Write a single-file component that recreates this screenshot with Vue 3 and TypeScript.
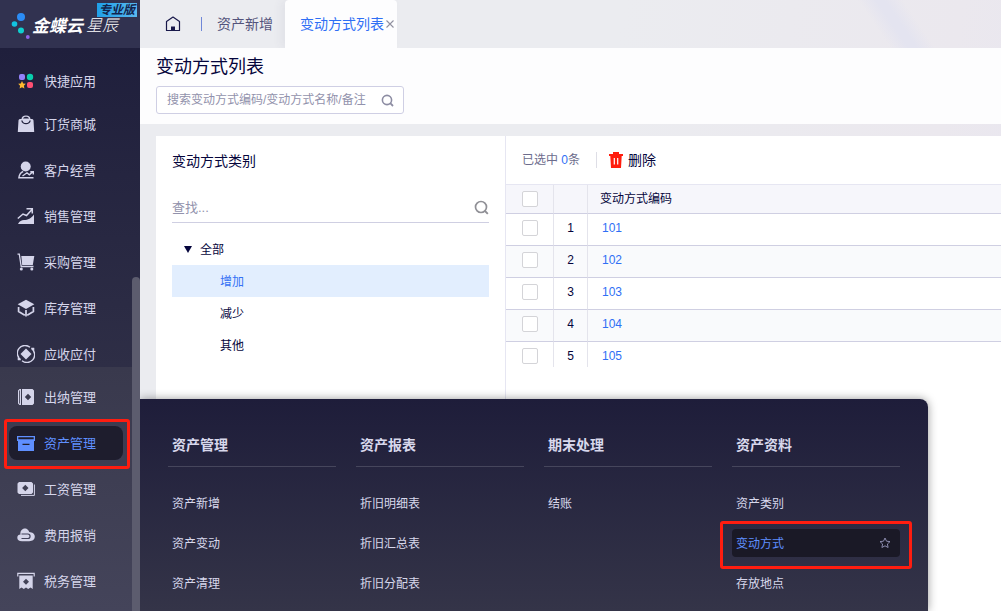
<script setup lang="ts">
import { ref } from 'vue'

interface MenuItem {
  label: string
  icon: string
  active?: boolean
}

interface FlyoutGroup {
  title: string
  items: string[]
}

const upperMenu: MenuItem[] = [
  { label: '订货商城', icon: 'bag' },
  { label: '客户经营', icon: 'customer' },
  { label: '销售管理', icon: 'sales' },
  { label: '采购管理', icon: 'cart' },
  { label: '库存管理', icon: 'box' },
  { label: '应收应付', icon: 'cycle' },
]

const lowerMenu: MenuItem[] = [
  { label: '出纳管理', icon: 'ledger' },
  { label: '资产管理', icon: 'archive', active: true },
  { label: '工资管理', icon: 'wage' },
  { label: '费用报销', icon: 'expense' },
  { label: '税务管理', icon: 'tax' },
]

const flyout: FlyoutGroup[] = [
  { title: '资产管理', items: ['资产新增', '资产变动', '资产清理'] },
  { title: '资产报表', items: ['折旧明细表', '折旧汇总表', '折旧分配表'] },
  { title: '期末处理', items: ['结账'] },
  { title: '资产资料', items: ['资产类别', '变动方式', '存放地点'] },
]
const activeEntry = '变动方式'

const categories = ['增加', '减少', '其他']
const category = ref('增加')
const codes = ['101', '102', '103', '104', '105']
const keyword = ref('')
const treeKeyword = ref('')
</script>

<template>
  <div class="app">
    <aside class="sidebar">
      <div class="brand">
        <svg class="brand-mark" width="20" height="28" viewBox="0 0 20 28" aria-hidden="true">
          <circle cx="10" cy="6" r="4" fill="#2b8cf5" />
          <circle cx="3.5" cy="13" r="2.8" fill="#12c3e0" />
          <circle cx="10" cy="19.500" r="3" fill="#0fd0cf" />
          <circle cx="16.800" cy="26" r="1.900" fill="#8f63e8" />
        </svg>
        <span class="brand-name">金蝶云</span>
        <span class="brand-sub">星辰</span>
        <span class="edition">专业版</span>
      </div>
      <nav class="menu">
        <a href="#" class="menu-item quick">
          <svg width="18" height="18" viewBox="0 0 18 18" aria-hidden="true">
            <rect x="2" y="2" width="6" height="6" rx="2" fill="#9381fa" />
            <circle cx="13" cy="5" r="3.200" fill="#08cfae" />
            <path d="M5 9l1.200 2.500 2.600.3-1.900 1.900.5 2.800L5 15.200l-2.400 1.300.5-2.800-1.900-1.900 2.600-.3z" fill="#ffb92e" />
            <rect x="10" y="10" width="6" height="6" rx="2" fill="#ff4f72" />
          </svg>
          <span>快捷应用</span>
        </a>
        <div class="upper">
          <a v-for="m in upperMenu" :key="m.label" href="#" class="menu-item">
            <svg width="18" height="18" viewBox="0 0 18 18" fill="currentColor" aria-hidden="true">
              <template v-if="m.icon === 'bag'">
                <path fill-rule="evenodd" d="M4.500 4C4.700 1.800 6 .5 9 .5s4.300 1.300 4.500 3.500h1.200c1 0 1.600.5 1.800 1.500L17.200 17H.8L1.500 5.500C1.700 4.500 2.300 4 3.300 4zM6 3.500h6C11.500 2.300 10.500 1.800 9 1.800S6.500 2.300 6 3.500zM4.200 5.500C4.700 8 6.500 9.300 9 9.300s4.300-1.300 4.800-3.800h-1.300C12 7.300 10.900 8.100 9 8.100S6 7.300 5.500 5.500z" />
              </template>
              <template v-else-if="m.icon === 'customer'">
                <circle cx="8.700" cy="5.500" r="5" />
                <path fill="none" stroke="currentColor" stroke-width="1.400" d="M6.200 10.500C3.500 11.500 2.300 13.500 1.900 16.700H16.500M5.500 15l4.500-3.200 2.300 2 3.700-3.200M13.300 10.700h3v2.800" />
              </template>
              <template v-else-if="m.icon === 'sales'">
                <path d="M1 17c1.500-3 3.500-4 6-4 4 0 7-1.500 10-5.500V17z" />
                <path fill="none" stroke="currentColor" stroke-width="1.500" d="M.8 11.500L6 7l3.500 1.500L15 2.500M9.500 1.800h5.800v4.700" />
              </template>
              <template v-else-if="m.icon === 'cart'">
                <path d="M4.300 3H17.300L15.800 12H5.200z" />
                <path fill="none" stroke="currentColor" stroke-width="1.300" d="M.5 1.200h1.800l1.900 12.300H16.500" />
                <circle cx="4.300" cy="16" r="1.500" /><circle cx="14.800" cy="16" r="1.500" />
              </template>
              <template v-else-if="m.icon === 'box'">
                <path d="M9 .7l8.300 4.500L9 10 .7 5.200z" />
                <path fill="none" stroke="currentColor" stroke-width="1.700" d="M1.600 8v4.500L7.800 16.200M16.400 8v4.500L10.200 16.200M9 11v6.500" />
              </template>
              <template v-else>
                <path d="M9 3.500L14.500 9 9 14.500 3.500 9z" />
                <path fill="none" stroke="currentColor" stroke-width="1.400" d="M3.200 14.300A7.700 7.700 0 0 1 13 2.200M14.800 3.700A7.700 7.700 0 0 1 5 15.800M.8 14.500h3M17.200 3.500h-3M16.600 3v4M1.400 15v-4" />
              </template>
            </svg>
            <span>{{ m.label }}</span>
          </a>
        </div>
        <div class="lower">
          <a v-for="m in lowerMenu" :key="m.label" href="#" class="menu-item" :class="{ active: m.active }">
            <svg width="18" height="18" viewBox="0 0 18 18" fill="currentColor" aria-hidden="true">
              <template v-if="m.icon === 'ledger'">
                <path fill-rule="evenodd" d="M2.500 1H4v16H2.500L1 15.500v-13zM2.200 2.500v13H3v-13zM5 1h10.500L17 2.500v13L15.500 17H5zM11 5.800L7.800 9l3.200 3.200L14.200 9z" />
              </template>
              <template v-else-if="m.icon === 'archive'">
                <path fill-rule="evenodd" d="M0 2h18v5H0zM1.300 3.300v2h15.400v-2z" />
                <path fill-rule="evenodd" d="M1 7h16v10H1zM5.500 9.800V11h7V9.800z" />
              </template>
              <template v-else-if="m.icon === 'wage'">
                <path fill-rule="evenodd" d="M2 2h12.500L16 3.500v9L14.500 14H2L.5 12.500v-9zM8.300 4.800L5.100 8l3.200 3.200L11.500 8z" />
                <path fill="none" stroke="currentColor" d="M17.400 4.500V15.400H4" />
              </template>
              <template v-else-if="m.icon === 'expense'">
                <path d="M3.500 8.500C2.500 3.500 8 .8 11 4c.8.800 1 1.400 1.200 2 3.200.2 5.600 1.900 5.600 4.500 0 2.900-2.200 4.700-5.600 4.700H5C1.800 15.200.3 13.700.3 11.700S1.700 8.500 3.500 8.500z" />
                <path class="cut" fill="none" stroke-width="1.200" d="M4.500 8h6.300c3 0 3 4.500 0 4.500H4.500" />
              </template>
              <template v-else>
                <path fill-rule="evenodd" d="M2.300 3.500h13.400V17l-2.200-1.500-2.300 1.500L9 15.500 6.800 17l-2.300-1.500L2.300 17zM9 6.800L6 9.800l3 3 3-3z" />
                <path fill="none" stroke="currentColor" stroke-width="1.200" d="M.8 4.500V1.300h16.400v3.200" />
              </template>
            </svg>
            <span>{{ m.label }}</span>
          </a>
        </div>
      </nav>
      <div class="scroll-thumb"></div>
    </aside>

    <main class="main">
      <header class="tabs">
        <button class="home" aria-label="首页">
          <svg width="16" height="16" viewBox="0 0 16 16" aria-hidden="true">
            <path d="M1.500 14.500v-9L8 1l6.500 4.500v9z" fill="none" stroke="#18184a" stroke-width="1.200" stroke-linejoin="round" />
            <path d="M6 10.500h4v4H6z" fill="#18184a" />
          </svg>
        </button>
        <span class="tab-sep"></span>
        <button class="tab">资产新增</button>
        <div class="tab current">
          <button class="tab-label">变动方式列表</button>
          <button class="close" aria-label="关闭">
            <svg width="8" height="8" viewBox="0 0 8 8" aria-hidden="true">
              <path d="M.5.5l7 7M7.500.5l-7 7" stroke="#9090a0" stroke-width="1.100" />
            </svg>
          </button>
        </div>
      </header>

      <section class="title-bar">
        <h1>变动方式列表</h1>
        <div class="search">
          <input v-model="keyword" type="text" aria-label="搜索" placeholder="搜索变动方式编码/变动方式名称/备注" />
          <svg width="13" height="13" viewBox="0 0 13 13" aria-hidden="true">
            <circle cx="6" cy="6" r="4.600" fill="none" stroke="#8d8da3" stroke-width="1.600" />
            <path d="M9.200 9.200l2.800 2.800" stroke="#8d8da3" stroke-width="1.800" />
          </svg>
        </div>
      </section>

      <div class="content">
        <section class="category">
          <h2>变动方式类别</h2>
          <div class="tree-search">
            <input v-model="treeKeyword" type="text" aria-label="查找类别" placeholder="查找..." />
            <svg width="15" height="15" viewBox="0 0 15 15" aria-hidden="true">
              <circle cx="7" cy="7" r="5.500" fill="none" stroke="#909096" stroke-width="1.700" />
              <path d="M10.500 10.500l3.300 3.300" stroke="#909096" stroke-width="1.900" />
            </svg>
          </div>
          <div class="tree">
            <button class="node root">
              <svg width="8" height="7" viewBox="0 0 8 7" aria-hidden="true"><path d="M0 0h8L4 7z" fill="#05053c" /></svg>
              <span>全部</span>
            </button>
            <button
              v-for="c in categories"
              :key="c"
              class="node leaf"
              :class="{ selected: c === category }"
              @click="category = c"
            ><span>{{ c }}</span></button>
          </div>
        </section>

        <section class="list">
          <div class="toolbar">
            <span class="picked">已选中 <b>0</b>条</span>
            <button class="delete">
              <svg width="14" height="16" viewBox="0 0 14 16" aria-hidden="true">
                <path fill="#ff1d0e" fill-rule="evenodd" d="M4 0h6v2h4v2h-1.300L12 16H2L1.300 4H0V2h4zM4.700 6v6.500h1.200V6zm3.400 0v6.500h1.200V6z" />
              </svg>
              <span>删除</span>
            </button>
          </div>
          <table>
            <thead>
              <tr>
                <th class="col-check"><input type="checkbox" aria-label="全选" /></th>
                <th class="col-no"></th>
                <th class="col-code">变动方式编码</th>
              </tr>
            </thead>
            <tbody>
              <tr v-for="(code, i) in codes" :key="code">
                <td class="col-check"><input type="checkbox" :aria-label="'选择 ' + code" /></td>
                <td class="col-no">{{ i + 1 }}</td>
                <td class="col-code"><a href="#">{{ code }}</a></td>
              </tr>
            </tbody>
          </table>
        </section>
      </div>
    </main>

    <div class="flyout">
      <section v-for="g in flyout" :key="g.title" class="fly-group">
        <h3>{{ g.title }}</h3>
        <a
          v-for="item in g.items"
          :key="item"
          href="#"
          class="fly-item"
          :class="{ active: item === activeEntry }"
        >
          <span>{{ item }}</span>
          <svg v-if="item === activeEntry" width="12" height="12" viewBox="0 0 12 12" aria-hidden="true">
            <path d="M6 1l1.500 3.200 3.500.4-2.600 2.400.7 3.500L6 8.800 2.900 10.500l.7-3.500L1 4.600l3.500-.4z" fill="none" stroke="#8c8cae" stroke-linejoin="round" />
          </svg>
        </a>
      </section>
    </div>
  </div>
</template>

<style>
body {
  margin: 0;
}
</style>

<style scoped>
.app {
  position: relative;
  display: flex;
  min-height: 100vh;
  overflow: hidden;
  font-family: "Liberation Sans", "Noto Sans CJK SC", sans-serif;
  font-size: 12px;
  color: #05053c;
  background: #fff;
}

.app *,
.app *::before,
.app *::after {
  box-sizing: border-box;
}

a {
  color: inherit;
  text-decoration: none;
}

button,
input {
  margin: 0;
  padding: 0;
  border: 0;
  background: none;
  font: inherit;
  color: inherit;
}

h1,
h2,
h3 {
  margin: 0;
  font-weight: 400;
}

svg {
  flex: none;
  display: block;
}

.sidebar {
  position: relative;
  z-index: 3;
  flex: none;
  display: flex;
  flex-direction: column;
  width: 140px;
  background: linear-gradient(#1f1f3c 48px, #2e2e46 367px);
}

.brand {
  position: relative;
  display: flex;
  align-items: center;
  height: 48px;
  padding-left: 11px;
  background: #313250;
  color: #fff;
  font-style: italic;
}

.brand-mark {
  margin-top: 2px;
}

.brand-name {
  padding-left: 1px;
  font-size: 17px;
  font-weight: 700;
}

.brand-sub {
  padding-left: 3px;
  font-size: 16px;
  font-weight: 300;
}

.edition {
  position: absolute;
  top: 3px;
  right: 3px;
  padding: 0 2px;
  background: linear-gradient(90deg, #1f9fe8, #5ab8ee);
  color: #12234c;
  font-size: 12px;
  font-weight: 700;
  line-height: 14px;
}

.menu {
  flex: 1;
  display: flex;
  flex-direction: column;
}

.menu-item {
  position: relative;
  z-index: 0;
  flex: none;
  display: flex;
  align-items: center;
  gap: 9px;
  height: 46px;
  padding-left: 17px;
  color: #d5d5ea;
  font-size: 13px;
}

.menu-item span,
.node span,
.fly-item span,
.tab-label,
.delete span {
  padding-bottom: 2px;
}

.menu-item.quick {
  height: 53px;
  padding-top: 13px;
}

.upper {
  height: 266px;
  overflow: hidden;
}

.lower {
  flex: 1;
  padding-top: 7px;
  background: linear-gradient(#39394d, #44445a);
}

.cut {
  stroke: #41415a;
}

.menu-item.active {
  color: #5f8fff;
}

.menu-item.active::before {
  content: "";
  position: absolute;
  z-index: -1;
  inset: 6px 17px 6px 9px;
  border-radius: 8px;
  background: #1e1d2d;
}

.menu-item.active::after {
  content: "";
  position: absolute;
  inset: -1px 10px -3px 4px;
  border: 3px solid #ff1d10;
  border-radius: 3px;
}

.scroll-thumb {
  position: absolute;
  top: 277px;
  right: 0;
  bottom: 0;
  width: 8px;
  border-radius: 4px 4px 0 0;
  background: #5c5c6e;
}

.main {
  flex: 1;
  min-width: 0;
  display: flex;
  flex-direction: column;
  background: linear-gradient(100deg, #ebecf0 50%, #ebe8ee 85%, #e8e6f0);
}

.tabs {
  display: flex;
  align-items: center;
  height: 48px;
  padding-left: 25px;
  background: linear-gradient(56deg, transparent 84%, #e4e4f0 86%, #e4e4f0 87%, transparent 89%);
  font-size: 14px;
  color: #54547c;
}

.tab-sep {
  width: 1px;
  height: 14px;
  margin: 0 15px 0 20px;
  background: #6f87d8;
}

.tab.current {
  display: flex;
  align-items: center;
  align-self: stretch;
  gap: 2px;
  margin-left: 12px;
  padding: 0 3px 0 15px;
  border-radius: 4px 4px 0 0;
  background: #fdfdfe;
  color: #2f6ff5;
  box-shadow: -4px 0 10px rgba(60, 60, 100, 0.06);
}

.tab {
  padding-bottom: 2px;
}

.close {
  display: flex;
}

.title-bar {
  position: relative;
  height: 76px;
  padding: 5px 16px 0;
  background: #fdfdfe;
}

.title-bar h1 {
  font-size: 18px;
  line-height: 28px;
}

.search {
  display: flex;
  align-items: center;
  width: 248px;
  height: 28px;
  margin-top: 5px;
  padding: 0 9px 0 10px;
  border: 1px solid #cfcfe4;
  border-radius: 3px;
  background: #fff;
}

.search input,
.tree-search input {
  flex: 1;
  min-width: 0;
  outline: none;
}

.search input::placeholder,
.tree-search input::placeholder {
  color: #9292ac;
  opacity: 1;
}

.content {
  flex: 1;
  display: flex;
  padding: 12px 0 0 16px;
}

.category {
  flex: none;
  width: 349px;
  padding: 0 16px;
  background: #fff;
}

.category h2 {
  font-size: 14px;
  line-height: 50px;
}

.tree-search {
  display: flex;
  align-items: center;
  height: 30px;
  margin: 7px 0 10px;
  border-bottom: 1px solid #cfcfe2;
  font-size: 13px;
}

.tree {
  display: flex;
  flex-direction: column;
}

.node {
  display: flex;
  align-items: center;
  gap: 8px;
  height: 32px;
  padding-left: 12px;
  text-align: left;
}

.node.leaf {
  padding-left: 48px;
}

.node.selected {
  background: #e2eefe;
  color: #3471f5;
}

.list {
  flex: 1;
  min-width: 0;
  border-left: 1px solid #e6e6f2;
  background: #fff;
}

.toolbar {
  display: flex;
  align-items: center;
  height: 48px;
  padding-left: 16px;
}

.picked {
  padding-right: 16px;
  border-right: 1px solid #dedee6;
  color: #6c6c8c;
  line-height: 16px;
}

.picked b {
  color: #2f6ff5;
  font-weight: 400;
}

.delete {
  display: flex;
  align-items: center;
  gap: 5px;
  margin-left: 12px;
  font-size: 14px;
}

table {
  width: 100%;
  border-collapse: separate;
  border-spacing: 0;
  table-layout: fixed;
  border-top: 1px solid #e6e6f2;
}

th,
td {
  height: 32px;
  padding: 0 0 3px;
  border-bottom: 1px solid #cfcfe2;
  font-weight: 400;
  text-align: left;
}

th {
  height: 29px;
  background: #f6f6fb;
}

th.col-check {
  padding-bottom: 0;
}

tbody tr:nth-child(even) td {
  background: #f9fafc;
}

tbody tr:last-child td {
  height: 25px;
  padding-top: 3px;
  padding-bottom: 0;
  border-bottom: 0;
}

.col-check {
  width: 48px;
  border-right: 1px solid #e4e4ec;
}

.col-no {
  width: 34px;
  border-right: 1px solid #e4e4ec;
  text-align: center;
}

.col-check input {
  appearance: none;
  display: block;
  width: 16px;
  height: 16px;
  margin-left: 16px;
  border: 1px solid #d4d4d8;
  border-radius: 2px;
  background: #fff;
}

.col-code {
  padding-left: 12px;
}

td.col-code {
  padding-left: 14px;
  color: #2f6ff5;
}

.flyout {
  position: absolute;
  z-index: 2;
  left: 140px;
  bottom: 0;
  display: flex;
  gap: 20px;
  padding: 30px 28px 14px;
  border-radius: 0 8px 0 0;
  background: linear-gradient(#1e1d3a, #343448);
  box-shadow: 0 0 10px rgba(0, 0, 0, 0.4);
  color: #d8d8ec;
}

.fly-group {
  display: flex;
  flex-direction: column;
  gap: 12px;
  width: 168px;
}

.fly-group h3 {
  height: 38px;
  margin-bottom: 10px;
  padding-left: 4px;
  border-bottom: 1px solid #46465c;
  font-size: 14px;
  font-weight: 700;
  line-height: 32px;
}

.fly-item {
  position: relative;
  display: flex;
  align-items: center;
  justify-content: space-between;
  height: 28px;
  padding: 0 9px 0 4px;
  border-radius: 4px;
}

.fly-item.active {
  background: #1a1926;
  color: #5f8fff;
}

.fly-item.active::after {
  content: "";
  position: absolute;
  inset: -8px -12px -12px;
  border: 3px solid #ff1d10;
  border-radius: 3px;
}
</style>
